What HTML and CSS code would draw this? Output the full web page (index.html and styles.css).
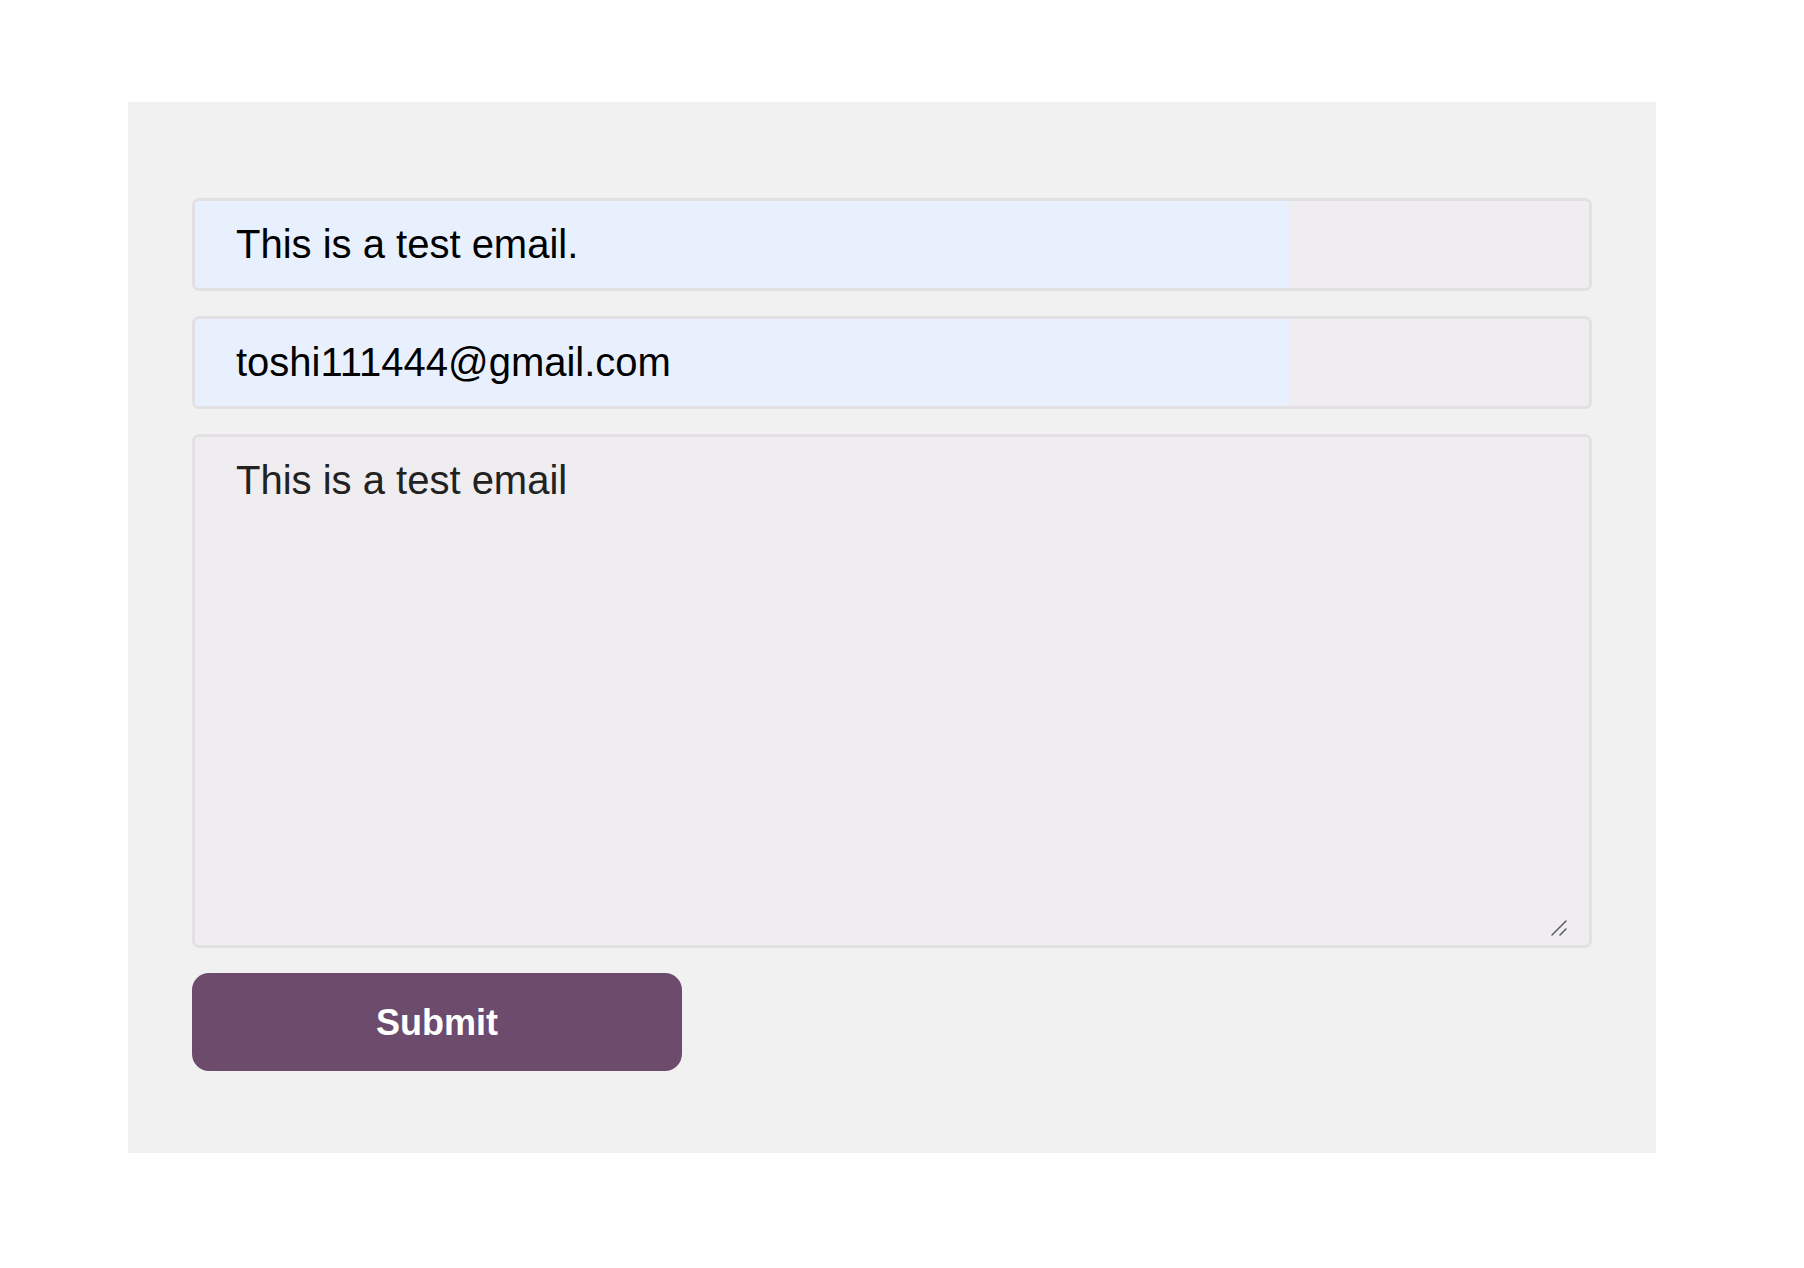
FILE: index.html
```html
<!DOCTYPE html>
<html lang="en">
<head>
<meta charset="utf-8">
<title>Contact form</title>
<link rel="stylesheet" href="styles.css">
</head>
<body>
<main class="panel">
  <form class="form">
    <input class="field field-autofill" type="text" value="This is a test email." readonly>
    <input class="field field-autofill" type="email" value="toshi111444@gmail.com" readonly>
    <div class="area-wrap">
      <textarea class="field field-area" readonly>This is a test email</textarea>
      <svg class="grip" width="16" height="16" viewBox="0 0 16 16" aria-hidden="true">
        <line x1="1" y1="15" x2="15" y2="1" stroke="#555" stroke-width="1.4" stroke-linecap="round"/>
        <line x1="9" y1="15" x2="15" y2="9" stroke="#555" stroke-width="1.4" stroke-linecap="round"/>
      </svg>
    </div>
    <button class="submit" type="button">Submit</button>
  </form>
</main>
</body>
</html>
```
FILE: styles.css
```css
* { box-sizing: border-box; }
html, body {
  margin: 0;
  padding: 0;
  background: #ffffff;
}
body {
  font-family: "Liberation Sans", Arial, Helvetica, sans-serif;
  padding-top: 102px;
  padding-left: 128px;
}
.panel {
  width: 1528px;
  height: 1051px;
  background: #f2f1f2;
  padding: 96px 64px 0 64px;
}
.form {
  display: flex;
  flex-direction: column;
  align-items: flex-start;
  gap: 25px;
}
.field {
  display: block;
  width: 100%;
  margin: 0;
  border: 3px solid #e2e0e2;
  border-radius: 7px;
  background: #efedf0;
  font-family: "Liberation Sans", Arial, Helvetica, sans-serif;
  font-size: 40px;
  outline: none;
}
.field-autofill {
  height: 93px;
  padding: 0 41px;
  color: #000000;
  background: linear-gradient(to right, #e8f0fd 0, #e8f0fd 1095px, #efedf0 1095px);
}
.area-wrap {
  position: relative;
  width: 100%;
}
.field-area {
  height: 514px;
  padding: 20px 41px;
  color: #222222;
  resize: none;
  line-height: 1.15;
}
.grip {
  position: absolute;
  right: 25px;
  bottom: 12px;
  pointer-events: none;
}
.submit {
  width: 490px;
  height: 98px;
  margin: 0;
  padding: 2px 0 0 0;
  border: none;
  border-radius: 17px;
  background: #6c4b6d;
  color: #ffffff;
  font-family: "Liberation Sans", Arial, Helvetica, sans-serif;
  font-weight: bold;
  font-size: 36px;
  cursor: pointer;
}
```
